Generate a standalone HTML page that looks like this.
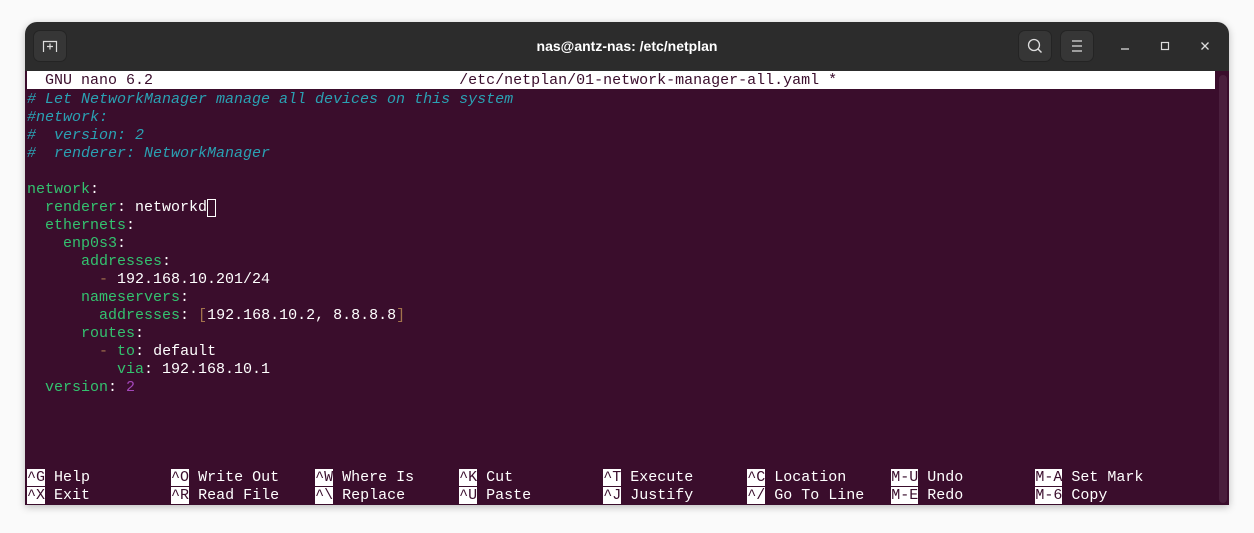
<!DOCTYPE html>
<html><head><style>
body{margin:0;width:1254px;height:533px;background:#fafafa;position:relative;overflow:hidden;font-family:"Liberation Sans",sans-serif}
.win{position:absolute;left:25px;top:22px;width:1204px;height:483px;background:#2c2c2c;border-radius:12px 12px 0 0;box-shadow:0 2px 8px rgba(0,0,0,.25);overflow:hidden}
.title{position:absolute;left:0;right:0;top:16px;text-align:center;color:#fff;font-weight:bold;font-size:14px}
.btn{position:absolute;top:8px;width:34px;height:32px;background:#363636;border:1px solid #242424;border-radius:7px;box-sizing:border-box}
.term{position:absolute;left:0;top:49px;width:1204px;height:434px;background:#3a0d2c}
.sb{position:absolute;right:2px;top:4px;width:8px;bottom:2px;background:#4a1f3d;border-radius:4px}
.l{position:absolute;left:2px;height:18px;line-height:18px;font-family:"Liberation Mono",monospace;font-size:15px;white-space:pre;color:#fff;margin-top:2px}
.c{color:#2aa1b3;font-style:italic}.g{color:#33c26f}.o{color:#a2734c}.p{color:#a347ba}
.k{background:#fff;color:#3a0d2c}
.hd{background:#fff;color:#3a0d2c;width:1188px;margin-top:0;line-height:20px}
</style></head><body>
<div class="win">
 <div class="btn" style="left:8px"><svg width="34" height="32" viewBox="0 0 34 32" style="position:absolute;left:-1px;top:-1px"><path d="M10.5 22V11.5h13V22M17 13.5v6M14 16.5h6" stroke="#ddd" stroke-width="1.2" fill="none"/></svg></div>
 <div class="title">nas@antz-nas: /etc/netplan</div>
 <div class="btn" style="left:993px"><svg width="34" height="32" viewBox="0 0 34 32" style="position:absolute;left:-1px;top:-1px"><circle cx="16" cy="15" r="5.5" stroke="#ddd" stroke-width="1.3" fill="none"/><path d="M20 19l3.5 3.5" stroke="#ddd" stroke-width="1.4"/></svg></div>
 <div class="btn" style="left:1035px"><svg width="34" height="32" viewBox="0 0 34 32" style="position:absolute;left:-1px;top:-1px"><path d="M12 11h10M12 16h10M12 21h10" stroke="#ddd" stroke-width="1.2"/></svg></div>
 <svg width="204" height="48" style="position:absolute;left:1000px;top:0"><path d="M96 27h8" stroke="#ddd" stroke-width="1.3"/><rect x="136.5" y="20.5" width="7" height="7" stroke="#ddd" stroke-width="1.2" fill="none"/><path d="M176.5 20.5l7 7M183.5 20.5l-7 7" stroke="#ddd" stroke-width="1.3"/></svg>
 <div class="term">
  <div class="sb"></div>
  <div class="l hd" style="top:0">  GNU nano 6.2                                  /etc/netplan/01-network-manager-all.yaml *</div>
  <div class="l c" style="top:18px"># Let NetworkManager manage all devices on this system</div>
  <div class="l c" style="top:36px">#network:</div>
  <div class="l c" style="top:54px">#  version: 2</div>
  <div class="l c" style="top:72px">#  renderer: NetworkManager</div>
  <div class="l" style="top:108px"><span class="g">network</span>:</div>
  <div class="l" style="top:126px">  <span class="g">renderer</span>: networkd<span style="outline:1px solid #fff;outline-offset:-1px;display:inline-block;width:9px;height:18px;vertical-align:top"> </span></div>
  <div class="l" style="top:144px">  <span class="g">ethernets</span>:</div>
  <div class="l" style="top:162px">    <span class="g">enp0s3</span>:</div>
  <div class="l" style="top:180px">      <span class="g">addresses</span>:</div>
  <div class="l" style="top:198px">        <span class="o">-</span> 192.168.10.201/24</div>
  <div class="l" style="top:216px">      <span class="g">nameservers</span>:</div>
  <div class="l" style="top:234px">        <span class="g">addresses</span>: <span class="o">[</span>192.168.10.2, 8.8.8.8<span class="o">]</span></div>
  <div class="l" style="top:252px">      <span class="g">routes</span>:</div>
  <div class="l" style="top:270px">        <span class="o">-</span> <span class="g">to</span>: default</div>
  <div class="l" style="top:288px">          <span class="g">via</span>: 192.168.10.1</div>
  <div class="l" style="top:306px">  <span class="g">version</span>: <span class="p">2</span></div>
  <div class="l" style="top:396px"><span class="k">^G</span> Help         <span class="k">^O</span> Write Out    <span class="k">^W</span> Where Is     <span class="k">^K</span> Cut          <span class="k">^T</span> Execute      <span class="k">^C</span> Location     <span class="k">M-U</span> Undo        <span class="k">M-A</span> Set Mark</div>
  <div class="l" style="top:414px"><span class="k">^X</span> Exit         <span class="k">^R</span> Read File    <span class="k">^\</span> Replace      <span class="k">^U</span> Paste        <span class="k">^J</span> Justify      <span class="k">^/</span> Go To Line   <span class="k">M-E</span> Redo        <span class="k">M-6</span> Copy</div>
 </div>
</div>
</body></html>
